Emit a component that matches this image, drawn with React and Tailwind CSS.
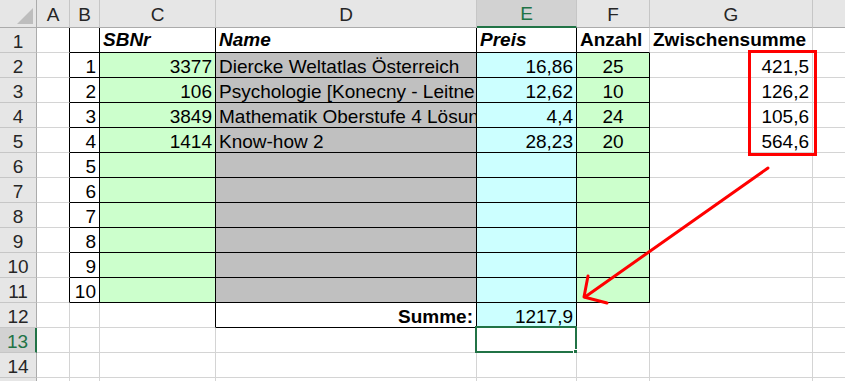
import React from "react";

// sheet content, keyed by row then column letter
const DATA = {
  1: { C: "SBNr", D: "Name", E: "Preis", F: "Anzahl", G: "Zwischensumme" },
  2: { B: "1", C: "3377", D: "Diercke Weltatlas Österreich", E: "16,86", F: "25", G: "421,5" },
  3: { B: "2", C: "106", D: "Psychologie [Konecny - Leitne", E: "12,62", F: "10", G: "126,2" },
  4: { B: "3", C: "3849", D: "Mathematik Oberstufe 4 Lösun", E: "4,4", F: "24", G: "105,6" },
  5: { B: "4", C: "1414", D: "Know-how 2", E: "28,23", F: "20", G: "564,6" },
  6: { B: "5" },
  7: { B: "6" },
  8: { B: "7" },
  9: { B: "8" },
  10: { B: "9" },
  11: { B: "10" },
  12: { D: "Summe:", E: "1217,9" },
};

const COLS = ["A", "B", "C", "D", "E", "F", "G", "H"];
const ROW_NUMS = Array.from({ length: 15 }, (_, i) => i + 1);

const cellBg = (r, c) => {
  if (r >= 2 && r <= 11 && (c === "C" || c === "F")) return "bg-[#ccffcc]";
  if (r >= 2 && r <= 11 && c === "D") return "bg-[#c0c0c0]";
  if (r >= 2 && r <= 12 && c === "E") return "bg-[#ccffff]";
  return "bg-white";
};

const rightBlack = (r, c) =>
  (r >= 1 && r <= 11 && ["A", "B", "C", "D", "E"].includes(c)) ||
  (r === 12 && ["C", "D", "E"].includes(c)) ||
  (r >= 2 && r <= 11 && c === "F");

const bottomBlack = (r, c) =>
  (r >= 1 && r <= 11 && ["B", "C", "D", "E", "F"].includes(c)) ||
  (r === 12 && ["D", "E"].includes(c));

const cellAlign = (r, c) => {
  if (r === 1) return "justify-start items-center";
  if (r === 12 && c === "D") return "justify-end items-end";
  if (c === "D") return "justify-start items-end";
  if (c === "F") return "justify-center items-end";
  return "justify-end items-end";
};

const cellFont = (r, c) => {
  if (r === 1 && ["C", "D", "E"].includes(c)) return "font-bold italic";
  if (r === 1) return "font-bold";
  if (r === 12 && c === "D") return "font-bold";
  return "";
};

const ColHeader = ({ label }) => {
  const active = label === "E";
  return (
    <div
      className={`flex items-end justify-center pb-[3px] border-r border-r-[#c6c6c6] ${
        active
          ? "bg-[#d2d2d2] text-[#217346] border-b-2 border-b-[#217346]"
          : "bg-[#e6e6e6] text-[#262626] border-b border-b-[#ababab]"
      }`}
    >
      {label === "H" ? "" : label}
    </div>
  );
};

const RowHeader = ({ n }) => {
  const active = n === 13;
  return (
    <div
      className={`flex items-center justify-center pt-[2px] border-b border-b-[#c6c6c6] ${
        active
          ? "bg-[#d2d2d2] text-[#217346] border-r-2 border-r-[#217346]"
          : "bg-[#e6e6e6] text-[#262626] border-r border-r-[#ababab]"
      }`}
    >
      {/* row 15 is only a sliver at the bottom edge */}
      {n < 15 ? n : ""}
    </div>
  );
};

const Cell = ({ r, c }) => {
  const text = DATA[r]?.[c] ?? "";
  const selected = r === 13 && c === "E";
  return (
    <div
      className={`relative flex whitespace-nowrap px-[3px] pb-[1px] border-r border-b ${cellBg(r, c)} ${cellAlign(r, c)} ${cellFont(r, c)} ${
        rightBlack(r, c) ? "border-r-black" : "border-r-[#d4d4d4]"
      } ${bottomBlack(r, c) ? "border-b-black" : "border-b-[#d4d4d4]"} ${selected ? "overflow-visible" : "overflow-hidden"}`}
    >
      {text}
      {selected && (
        <>
          <div className="absolute -left-[2px] -top-[2px] -right-px -bottom-px border-2 border-[#217346]" />
          <div className="absolute -right-[3px] -bottom-[3px] w-[6px] h-[6px] bg-[#217346] border border-white" />
        </>
      )}
    </div>
  );
};

export default function App() {
  return (
    <div className="relative w-[845px] h-[381px] overflow-hidden bg-white font-['Liberation_Sans',Arial,sans-serif] text-[19px] leading-none text-black">
      <div className="grid grid-cols-[37px_33px_30px_116px_261px_100px_73px_163px_120px] grid-rows-[28px_repeat(15,25px)]">
        {/* corner */}
        <div className="relative bg-[#e6e6e6] border-r border-b border-r-[#ababab] border-b-[#ababab]">
          <svg className="absolute inset-0" width="36" height="27">
            <polygon points="33,8 33,24 17,24" fill="#bdbdbd" />
          </svg>
        </div>
        {COLS.map((c) => (
          <ColHeader key={c} label={c} />
        ))}

        {ROW_NUMS.map((r) => (
          <React.Fragment key={r}>
            <RowHeader n={r} />
            {COLS.map((c) => (
              <Cell key={c} r={r} c={c} />
            ))}
          </React.Fragment>
        ))}
      </div>

      {/* red annotation */}
      <svg className="absolute inset-0 pointer-events-none" width="845" height="381">
        <rect x="749.5" y="51.5" width="66" height="103" fill="none" stroke="#ff0000" strokeWidth="3" />
        <g stroke="#ff0000" strokeWidth="3" strokeLinecap="round" strokeLinejoin="round" fill="none">
          <line x1="768" y1="168" x2="585" y2="297" />
          <polyline points="588,276 584,297 607,303" />
        </g>
      </svg>
    </div>
  );
}
